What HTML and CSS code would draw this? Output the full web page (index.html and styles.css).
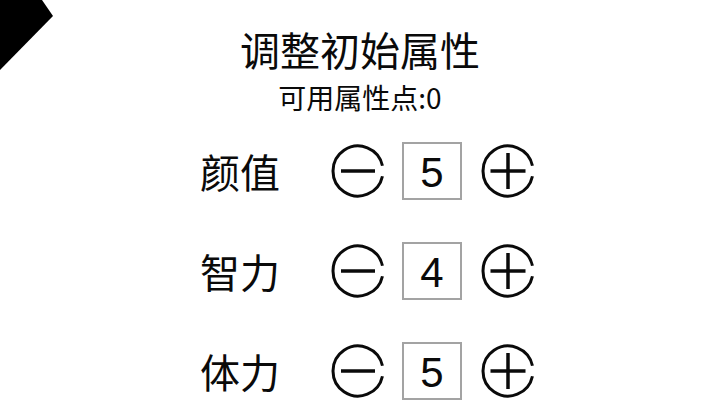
FILE: index.html
```html
<!DOCTYPE html>
<html lang="zh-CN">
<head>
<meta charset="utf-8">
<title>调整初始属性</title>
<link rel="stylesheet" href="styles.css">
</head>
<body>
<div class="screen">
  <svg class="corner" width="60" height="80" viewBox="0 0 60 80"><polygon points="0,0 42,0 53,16 0,70" fill="#000"/></svg>
  <header class="head">
    <h1 class="title">调整初始属性</h1>
    <p class="points">可用属性点:0</p>
  </header>
  <div class="stats">
    <div class="stat">
      <span class="label">颜值</span>
      <button class="btn minus" aria-label="减少"><svg width="54" height="54" viewBox="0 0 54 54"><path d="M51.45 32.2 A25 25 0 1 1 51.45 21.8" /><line x1="10" y1="27" x2="44" y2="27"/></svg></button>
      <div class="val">5</div>
      <button class="btn plus" aria-label="增加"><svg width="54" height="54" viewBox="0 0 54 54"><path d="M51.45 32.2 A25 25 0 1 1 51.45 21.8" /><line x1="9.5" y1="27" x2="44.5" y2="27"/><line x1="27" y1="9" x2="27" y2="45"/></svg></button>
    </div>
    <div class="stat">
      <span class="label">智力</span>
      <button class="btn minus" aria-label="减少"><svg width="54" height="54" viewBox="0 0 54 54"><path d="M51.45 32.2 A25 25 0 1 1 51.45 21.8" /><line x1="10" y1="27" x2="44" y2="27"/></svg></button>
      <div class="val">4</div>
      <button class="btn plus" aria-label="增加"><svg width="54" height="54" viewBox="0 0 54 54"><path d="M51.45 32.2 A25 25 0 1 1 51.45 21.8" /><line x1="9.5" y1="27" x2="44.5" y2="27"/><line x1="27" y1="9" x2="27" y2="45"/></svg></button>
    </div>
    <div class="stat">
      <span class="label">体力</span>
      <button class="btn minus" aria-label="减少"><svg width="54" height="54" viewBox="0 0 54 54"><path d="M51.45 32.2 A25 25 0 1 1 51.45 21.8" /><line x1="10" y1="27" x2="44" y2="27"/></svg></button>
      <div class="val">5</div>
      <button class="btn plus" aria-label="增加"><svg width="54" height="54" viewBox="0 0 54 54"><path d="M51.45 32.2 A25 25 0 1 1 51.45 21.8" /><line x1="9.5" y1="27" x2="44.5" y2="27"/><line x1="27" y1="9" x2="27" y2="45"/></svg></button>
    </div>
  </div>
</div>
</body>
</html>
```
FILE: styles.css
```css
html, body {
  margin: 0;
  padding: 0;
  background: #fff;
}
.screen {
  position: relative;
  width: 720px;
  height: 405px;
  overflow: hidden;
  font-family: "Noto Sans CJK SC", "Noto Sans", sans-serif;
  color: #0a0a0a;
}
.corner {
  position: absolute;
  left: 0;
  top: 0;
}
.head {
  display: flex;
  flex-direction: column;
  align-items: center;
  padding-top: 29px;
}
.title {
  margin: 0;
  font-size: 40px;
  font-weight: 400;
  line-height: 40px;
}
.points {
  margin: 14px 0 0;
  font-size: 28px;
  line-height: 28px;
}
.stats {
  display: flex;
  flex-direction: column;
  gap: 42px;
  padding-left: 200px;
  margin-top: 31px;
}
.stat {
  display: flex;
  align-items: center;
  height: 58px;
}
.label {
  width: 80px;
  font-size: 40px;
  line-height: 40px;
  margin-right: 51px;
}
.btn {
  border: 0;
  padding: 0;
  margin: 0;
  background: none;
  width: 54px;
  height: 54px;
  display: block;
}
.btn svg {
  display: block;
  fill: none;
  stroke: #0a0a0a;
  stroke-width: 3;
}
.btn svg line {
  stroke-width: 3.5;
}
.minus {
  margin-right: 17px;
}
.val {
  box-sizing: border-box;
  width: 60px;
  height: 58px;
  padding-top: 3px;
  border: 2px solid #a3a3a3;
  display: flex;
  align-items: center;
  justify-content: center;
  font-family: "Liberation Sans", Arial, sans-serif;
  font-size: 42px;
  margin-right: 19px;
}
```
